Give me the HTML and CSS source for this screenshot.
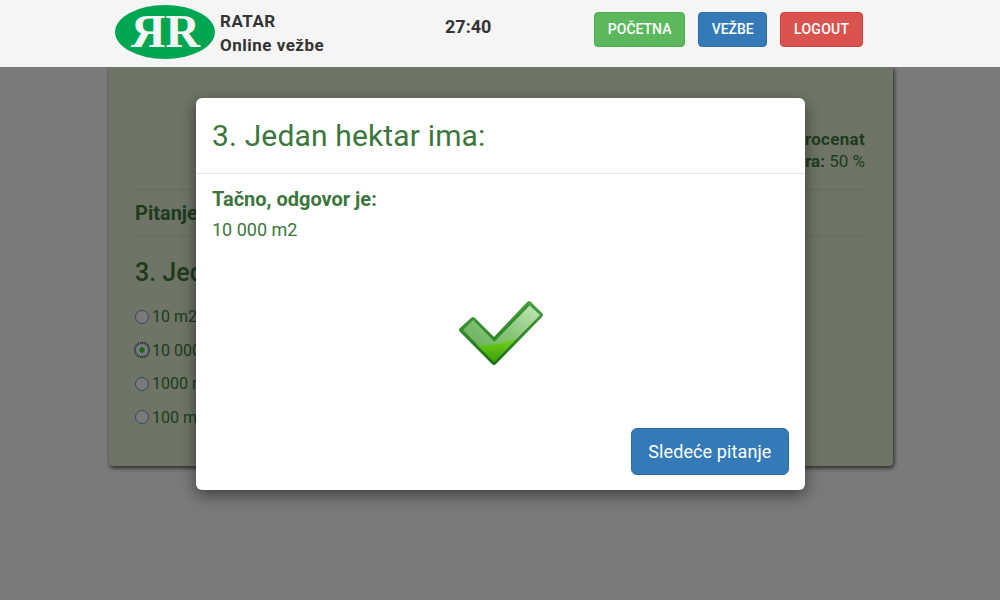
FILE: index.html
```html
<!DOCTYPE html>
<html lang="en">
<head>
    <meta charset="UTF-8">
    <meta name="viewport" content="width=device-width, initial-scale=1.0">
    <title>Ratar - Online vežbe</title>
    <link rel="stylesheet" href="styles.css">
</head>
<body>
    <!-- Header -->
    <header>
        <div class="brand">
            <svg class="logo" width="100" height="54" viewBox="0 0 100 54">
                <ellipse cx="50" cy="27" rx="50" ry="27" fill="#00a651"/>
                <text x="16" y="42" textLength="69" lengthAdjust="spacingAndGlyphs" class="logo-text">ЯR</text>
            </svg>
            <div class="brand-name">
                <div>RATAR</div>
                <div>Online vežbe</div>
            </div>
        </div>
        <div class="timer">27:40</div>
        <nav>
            <a class="btn btn-green">POČETNA</a>
            <a class="btn btn-blue">VEŽBE</a>
            <a class="btn btn-red">LOGOUT</a>
        </nav>
    </header>

    <!-- Quiz card behind the modal -->
    <div class="card">
        <div class="score">
            <div class="score-title">Procenat</div>
            <div><strong>tačnih odgovora:</strong> 50 %</div>
        </div>
        <div class="question-count">Pitanje 3 od 10</div>
        <h2>3. Jedan hektar ima:</h2>
        <label class="answer"><input type="radio" name="q3">10 m2</label>
        <label class="answer"><input type="radio" name="q3" checked>10 000 m2</label>
        <label class="answer"><input type="radio" name="q3">1000 m2</label>
        <label class="answer"><input type="radio" name="q3">100 m2</label>
    </div>

    <!-- Backdrop -->
    <div class="backdrop"></div>

    <!-- Modal -->
    <div class="modal">
        <div class="modal-header">
            <h1>3. Jedan hektar ima:</h1>
        </div>
        <div class="modal-body">
            <div class="result-title">Tačno, odgovor je:</div>
            <div class="result-answer">10 000 m2</div>
            <svg class="check" width="84" height="65" viewBox="0 0 84 65">
                <defs>
                    <linearGradient id="check-edge" x1="0" y1="0" x2="0" y2="1">
                        <stop offset="0" stop-color="#4f9f45"/>
                        <stop offset="1" stop-color="#14700f"/>
                    </linearGradient>
                    <linearGradient id="check-top" x1="0" y1="1" x2="1" y2="0">
                        <stop offset="0" stop-color="#5fa653"/>
                        <stop offset="0.55" stop-color="#86c578"/>
                        <stop offset="1" stop-color="#c4e8b8"/>
                    </linearGradient>
                    <linearGradient id="check-bottom" x1="0" y1="0" x2="0" y2="1">
                        <stop offset="0" stop-color="#74d21e"/>
                        <stop offset="1" stop-color="#3d9f08"/>
                    </linearGradient>
                </defs>
                <path d="M1 27 L12 17 Q14 15 16 17 L35 36 L68 1 Q70 -1 72 1 L83 12 Q85 14 83 16 L37 63 Q35 65 33 63 L1 31 Q-1 29 1 27 Z" fill="url(#check-edge)"/>
                <path d="M4 29 L14 19 L35 40 L70 4 L81 14 L35 61 Z" fill="url(#check-top)"/>
                <path d="M35 40 L70 4" stroke="#2f8a28" stroke-width="1.5" fill="none"/>
                <path d="M18 44 Q38 45 58 37 L35 61 Z" fill="url(#check-bottom)"/>
            </svg>
        </div>
        <div class="modal-footer">
            <a class="btn-next">Sledeće pitanje</a>
        </div>
    </div>
</body>
</html>
```

FILE: styles.css
```css
* {
    box-sizing: border-box;
}

html, body {
    height: 100%;
}

body {
    font-family: 'Roboto', sans-serif;
    margin: 0;
    padding: 0;
    background: #f5f5f5;
    color: #333;
    overflow: hidden;
}

header {
    position: relative;
    z-index: 30;
    display: flex;
    align-items: flex-start;
    height: 67px;
    padding: 5px 137px 0 115px;
    background: #f5f5f5;
}

.brand {
    display: flex;
    gap: 5px;
    width: 330px;
}

.logo-text {
    font-family: 'Liberation Serif', serif;
    font-size: 46px;
    font-weight: bold;
    fill: #f5f5f5;
}

.brand-name {
    padding-top: 4px;
    font-size: 17px;
    font-weight: bold;
    line-height: 24px;
    letter-spacing: 0.5px;
}

.timer {
    padding-top: 11px;
    font-size: 18px;
    font-weight: bold;
}

nav {
    display: flex;
    gap: 13px;
    margin-left: auto;
    padding-top: 7px;
}

.btn {
    display: block;
    height: 35px;
    padding: 0 12.6px;
    border: 1px solid transparent;
    border-radius: 4px;
    color: #fff;
    font-size: 14px;
    font-weight: 500;
    line-height: 33px;
}

.btn-green {
    background: #5cb85c;
    border-color: #4cae4c;
}

.btn-blue {
    background: #337ab7;
    border-color: #2e6da4;
}

.btn-red {
    background: #d9534f;
    border-color: #d43f3a;
    letter-spacing: 0.3px;
}

.card {
    width: 784px;
    height: 399px;
    margin-left: 109px;
    padding: 61px 28px 0 26px;
    background: #dcebcc;
    border-radius: 0 0 4px 4px;
    box-shadow: 1px 2px 4px rgba(0, 0, 0, 0.7);
    color: #3c763d;
}

.score {
    height: 62px;
    border-bottom: 1px solid #c9dcb6;
    text-align: right;
    font-size: 17px;
    line-height: 22px;
}

.score-title {
    font-weight: bold;
    letter-spacing: 0.3px;
}

.question-count {
    height: 47px;
    border-bottom: 1px solid #c9dcb6;
    font-size: 20px;
    font-weight: bold;
    line-height: 46px;
}

.card h2 {
    margin: 22px 0 13px;
    font-size: 25px;
    font-weight: 500;
    line-height: 28px;
}

.answer {
    display: flex;
    align-items: center;
    height: 33.5px;
    font-size: 16px;
}

.answer input {
    appearance: none;
    width: 14px;
    height: 14px;
    margin: 0 3px 0 0;
    background: #f4f4f4;
    border: 1.5px solid #6a8cc4;
    border-radius: 50%;
}

.answer input:checked {
    background: radial-gradient(circle, #33d033 0 2.5px, #f4f4f4 3px);
    outline: 1px dotted #000;
}

.backdrop {
    position: absolute;
    top: 0;
    left: 0;
    right: 0;
    bottom: 0;
    z-index: 10;
    background: rgba(0, 0, 0, 0.5);
}

.modal {
    position: absolute;
    top: 98px;
    left: 196px;
    z-index: 20;
    display: flex;
    flex-direction: column;
    width: 609px;
    height: 392px;
    background: #fff;
    border-radius: 6px;
    box-shadow: 0 5px 15px rgba(0, 0, 0, 0.5);
    color: #3c763d;
}

.modal-header {
    height: 76px;
    padding: 20px 16px 0;
    border-bottom: 1px solid #e5e5e5;
}

.modal-header h1 {
    margin: 0;
    font-size: 30px;
    font-weight: 400;
    line-height: 36px;
    letter-spacing: 0.15px;
}

.modal-body {
    flex: 1;
    padding: 15px 16px 0;
}

.result-title {
    font-size: 20px;
    font-weight: bold;
    line-height: 20px;
}

.result-answer {
    margin-top: 11px;
    font-size: 18px;
    line-height: 20px;
}

.check {
    display: block;
    margin: 61px auto 0;
}

.modal-footer {
    display: flex;
    justify-content: flex-end;
    padding: 0 16px 15px;
}

.btn-next {
    height: 47px;
    padding: 0 16.5px;
    background: #337ab7;
    border: 1px solid #2e6da4;
    border-radius: 6px;
    color: #fff;
    font-size: 18px;
    line-height: 45px;
    letter-spacing: 0.1px;
}
```
